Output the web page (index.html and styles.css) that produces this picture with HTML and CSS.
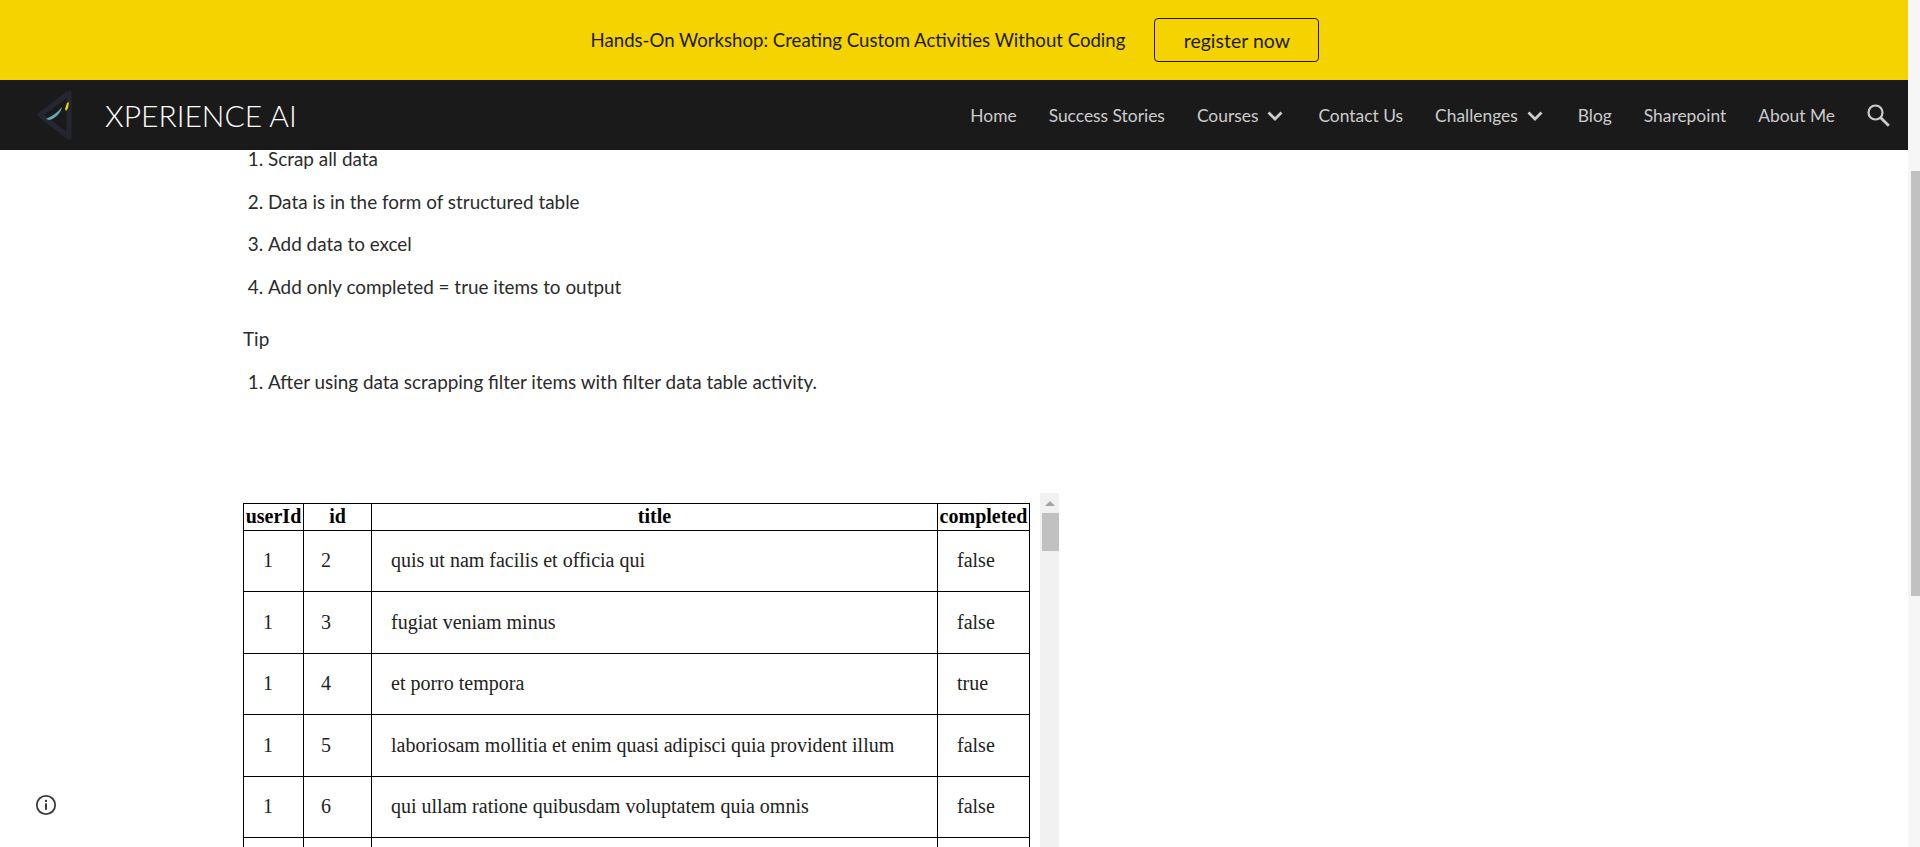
FILE: index.html
```html
<!DOCTYPE html>
<html>
<head>
    <title>Xperience AI - Data Scraping Challenge</title>
    <link rel="stylesheet" href="styles.css">
</head>
<body>
    <div class="page">
        <div class="banner">
            <span class="banner-text">Hands-On Workshop: Creating Custom Activities Without Coding</span>
            <a class="banner-btn">register now</a>
        </div>
        <div class="nav">
            <svg class="logo" width="48" height="54" viewBox="0 0 48 54">
                <path d="M36 5 L7 27 L36 49 Z" fill="none" stroke="#252730" stroke-width="5" stroke-linejoin="round"/>
                <path d="M13 31 C19 28 24 25 29 19 C28 25 22 31 16 32 Z" fill="#5fa8ad"/>
                <path d="M32 21 L34 15 L36 14 L35 20 L33 23 Z" fill="#f4d300"/>
            </svg>
            <span class="site-name">XPERIENCE AI</span>
            <div class="nav-links">
                <a class="nav-link">Home</a>
                <a class="nav-link">Success Stories</a>
                <a class="nav-link">Courses
                    <svg class="chevron" width="16" height="10" viewBox="0 0 16 10"><path d="M1.5 1.5 L8 8 L14.5 1.5" fill="none" stroke="#ccc" stroke-width="2.8"/></svg>
                </a>
                <a class="nav-link">Contact Us</a>
                <a class="nav-link">Challenges
                    <svg class="chevron" width="16" height="10" viewBox="0 0 16 10"><path d="M1.5 1.5 L8 8 L14.5 1.5" fill="none" stroke="#ccc" stroke-width="2.8"/></svg>
                </a>
                <a class="nav-link">Blog</a>
                <a class="nav-link">Sharepoint</a>
                <a class="nav-link">About Me</a>
                <svg class="search" width="23" height="23" viewBox="0 0 23 23">
                    <circle cx="8.5" cy="8.5" r="7" fill="none" stroke="#ccc" stroke-width="2.2"/>
                    <path d="M13.5 13.5 L21.8 21.8" stroke="#ccc" stroke-width="2.8"/>
                </svg>
            </div>
        </div>
        <div class="content">
            <ol class="steps first">
                <li>Scrap all data</li>
                <li>Data is in the form of structured table</li>
                <li>Add data to excel</li>
                <li>Add only completed = true items to output</li>
            </ol>
            <p class="tip">Tip</p>
            <ol class="steps">
                <li>After using data scrapping filter items with filter data table activity.</li>
            </ol>
            <div class="table-frame">
                <table class="todo-table">
                    <thead>
                        <tr><th class="col-user">userId</th><th class="col-id">id</th><th class="col-title">title</th><th class="col-done">completed</th></tr>
                    </thead>
                    <tbody>
                        <tr><td>1</td><td>2</td><td>quis ut nam facilis et officia qui</td><td>false</td></tr>
                        <tr><td>1</td><td>3</td><td>fugiat veniam minus</td><td>false</td></tr>
                        <tr><td>1</td><td>4</td><td>et porro tempora</td><td>true</td></tr>
                        <tr><td>1</td><td>5</td><td>laboriosam mollitia et enim quasi adipisci quia provident illum</td><td>false</td></tr>
                        <tr><td>1</td><td>6</td><td>qui ullam ratione quibusdam voluptatem quia omnis</td><td>false</td></tr>
                        <tr><td></td><td></td><td></td><td></td></tr>
                    </tbody>
                </table>
                <div class="frame-scroll">
                    <div class="frame-arrow"></div>
                    <div class="frame-thumb"></div>
                </div>
            </div>
        </div>
        <svg class="info" width="22" height="22" viewBox="0 0 22 22">
            <circle cx="11" cy="11" r="9.2" fill="none" stroke="#3c3c3c" stroke-width="1.8"/>
            <circle cx="11" cy="6.9" r="1.2" fill="#3c3c3c"/>
            <rect x="10" y="9.4" width="2" height="6.4" fill="#3c3c3c"/>
        </svg>
    </div>
    <div class="page-scroll">
        <div class="page-thumb"></div>
    </div>
</body>
</html>
```

FILE: styles.css
```css
html, body {
    height: 100%;
}

body {
    margin: 0;
    display: flex;
    overflow: hidden;
    font-family: "Lato", "Noto Sans", sans-serif;
    font-size: 18.9px;
    color: #2b2b2b;
    background-color: #fff;
}

.page {
    flex: 1;
    min-width: 0;
    display: flex;
    flex-direction: column;
    position: relative;
}

.banner {
    height: 80px;
    flex: none;
    display: flex;
    align-items: center;
    justify-content: center;
    gap: 29px;
    padding-left: 2px;
    background-color: #f4d300;
    color: #1c1a00;
    font-size: 18.6px;
}

.banner-btn {
    box-sizing: border-box;
    width: 165px;
    height: 44px;
    display: flex;
    align-items: center;
    justify-content: center;
    border: 1px solid #1c1a00;
    border-radius: 4px;
    font-size: 19.5px;
}

.nav {
    height: 70px;
    flex: none;
    display: flex;
    align-items: center;
    padding: 0 18px 0 33px;
    background-color: #1a1a1b;
    color: #ccc;
    font-size: 17.4px;
}

.site-name {
    margin-left: 24px;
    font-size: 30px;
    font-weight: 300;
    color: #fff;
}

.nav-links {
    margin-left: auto;
    display: flex;
    align-items: center;
    gap: 32px;
}

.nav-link {
    display: flex;
    align-items: center;
    gap: 9px;
}

.chevron {
    margin: 2px 3px 0 0;
}

.content {
    flex: 1;
    min-height: 0;
    overflow: hidden;
    padding-left: 243px;
}

.steps {
    margin: 0;
    padding-left: 25px;
}

.steps.first {
    margin-top: -5px;
}

.steps li {
    line-height: 27px;
    margin-bottom: 15.5px;
}

.tip {
    margin: 25.5px 0 15.5px;
    line-height: 27px;
}

.table-frame {
    margin-top: 98px;
    display: flex;
    align-items: flex-start;
    gap: 10px;
    height: 400px;
}

.todo-table {
    margin-top: 10px;
    width: 787px;
    table-layout: fixed;
    border-collapse: collapse;
    font-family: "Liberation Serif", serif;
    font-size: 20px;
    color: #222;
}

.todo-table th,
.todo-table td {
    border: 1px solid #000;
    padding: 0;
}

.todo-table th {
    height: 26px;
    text-align: center;
    color: #000;
}

.todo-table td {
    height: 60.5px;
    text-align: left;
    padding-left: 19px;
}

.todo-table td:nth-child(2) {
    padding-left: 17px;
}

.col-user { width: 59px; }
.col-id { width: 67px; }
.col-done { width: 91px; }

.frame-scroll {
    width: 19px;
    height: 400px;
    flex: none;
    background-color: #f1f1f1;
}

.frame-arrow {
    width: 0;
    margin: 8px auto 0;
    border-left: 5px solid transparent;
    border-right: 5px solid transparent;
    border-bottom: 5px solid #a3a3a3;
}

.frame-thumb {
    height: 38px;
    margin: 7px 0 0 2px;
    background-color: #c1c1c1;
}

.page-scroll {
    width: 12px;
    flex: none;
    background-color: #f6f6f6;
}

.page-thumb {
    height: 425px;
    margin: 171px 0 0 3px;
    background-color: #c1c1c1;
}

.info {
    position: absolute;
    left: 35px;
    top: 794px;
}
```
